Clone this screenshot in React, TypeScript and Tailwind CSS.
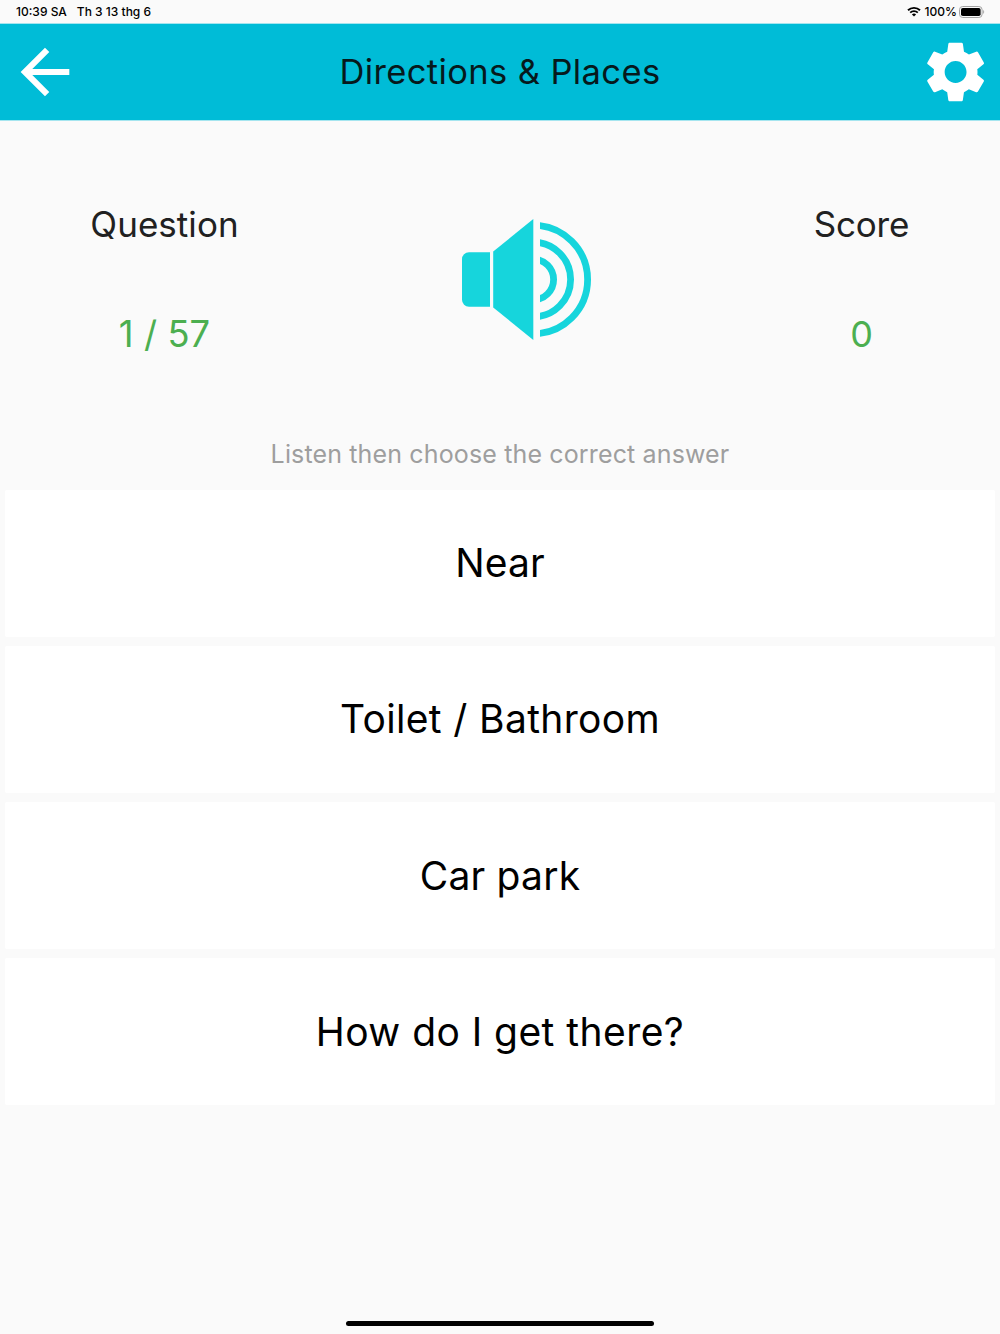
import React from 'react';
import { MdArrowBack, MdSettings } from 'react-icons/md';

const answers = [
    { text: 'Near', className: 'tracking-[0.05px]' },
    { text: 'Toilet / Bathroom', className: 'tracking-[0.35px]' },
    { text: 'Car park', className: 'tracking-[0.2px]' },
    { text: 'How do I get there?', className: 'tracking-[0.45px]' },
];

const StatusBar: React.FC = () => (
    <div className="h-[23px] pl-4 pr-[15px] flex items-center justify-between text-[12px] leading-[23px] font-medium text-black">
        <div className="flex gap-[10px]">
            <span>10:39 SA</span>
            <span>Th 3 13 thg 6</span>
        </div>
        <div className="flex items-center">
            <svg width="14" height="11" viewBox="0 0 14 11" className="mr-[4px]">
                <path d="M1 4.3a8.6 8.6 0 0 1 12 0" fill="none" stroke="#000" strokeWidth="1.9" />
                <path d="M3.2 6.7a5.4 5.4 0 0 1 7.6 0" fill="none" stroke="#000" strokeWidth="1.8" />
                <path d="M7 10.6L4.9 8.5a3 3 0 0 1 4.2 0z" />
            </svg>
            <span>100%</span>
            <svg width="26" height="12" viewBox="0 0 26 12" className="ml-[2px]">
                <rect x="0.5" y="0.5" width="22.6" height="11" rx="3.2" fill="none" stroke="#a3a3a3" />
                <rect x="2" y="2" width="19.6" height="8" rx="1.8" />
                <path d="M24.2 4.1c1.3.5 1.3 3.3 0 3.8z" fill="#a3a3a3" />
            </svg>
        </div>
    </div>
);

const Speaker: React.FC = () => (
    <svg width="130" height="122" viewBox="461 218 130 122" fill="#16d5dc">
        <path d="M490 252.2h-21a7 7 0 0 0-7 7v40.6a7 7 0 0 0 7 7h21z" />
        <path d="M493.2 251.6L533.3 218.9v121.1L493.2 307.4z" />
        <clipPath id="waves">
            <rect x="540" y="210" width="60" height="140" />
        </clipPath>
        <g clipPath="url(#waves)" fill="none" stroke="#16d5dc" strokeWidth="6.8">
            <circle cx="533.3" cy="279.5" r="20.3" />
            <circle cx="533.3" cy="279.5" r="37.3" />
            <circle cx="533.3" cy="279.5" r="54.3" />
        </g>
    </svg>
);

export default function App() {
    return (
        <div className="w-full h-[1334px] flex flex-col bg-[#fafafa] font-['Inter',sans-serif] overflow-hidden">
            <StatusBar />

            {/* App bar */}
            <header className="h-[98px] border-t border-b border-t-[#a5e5ef] border-b-[#a5e5ef] bg-[#00bcd7] flex items-center justify-between px-2">
                <button><MdArrowBack size={74} viewBox="-0.16 -0.16 24.33 24.33" className="text-white" /></button>
                <h1 className="text-[34.5px] text-[#06191c] tracking-[0.38px]">Directions &amp; Places</h1>
                <button><MdSettings size={74} viewBox="-0.36 -0.16 24.33 24.33" className="text-white" /></button>
            </header>

            {/* Progress, sound and score */}
            <section className="h-[318px] pt-[77px] flex">
                <div className="w-[329px] flex flex-col items-center text-[35px] leading-[52px]">
                    <span className="text-[#212121] tracking-[0.05px]">Question</span>
                    <span className="mt-[58px] text-[36.3px] text-[#4caf50] tracking-[0.1px]">1 / 57</span>
                </div>
                <div className="w-[394px] flex justify-center pt-[20px]">
                    <button className="h-[122px]"><Speaker /></button>
                </div>
                <div className="w-[277px] flex flex-col items-center text-[35px] leading-[52px]">
                    <span className="text-[#212121] tracking-[-0.2px]">Score</span>
                    <span className="mt-[58px] text-[36px] text-[#4caf50]">0</span>
                </div>
            </section>

            <p className="h-[51.1px] text-center text-[25px] leading-[30px] text-[#9e9e9e] tracking-[0.14px]">
                Listen then choose the correct answer
            </p>

            {/* Answers */}
            <div className="px-[5px] flex flex-col gap-[9.1px]">
                {answers.map((a) => (
                    <button key={a.text} className="h-[147px] bg-white rounded-[2px] text-[39px] text-black">
                        <span className={a.className}>{a.text}</span>
                    </button>
                ))}
            </div>

            {/* Home indicator */}
            <div className="mt-auto mb-2 mx-auto w-[308px] h-[5px] rounded-full bg-black" />
        </div>
    );
}
